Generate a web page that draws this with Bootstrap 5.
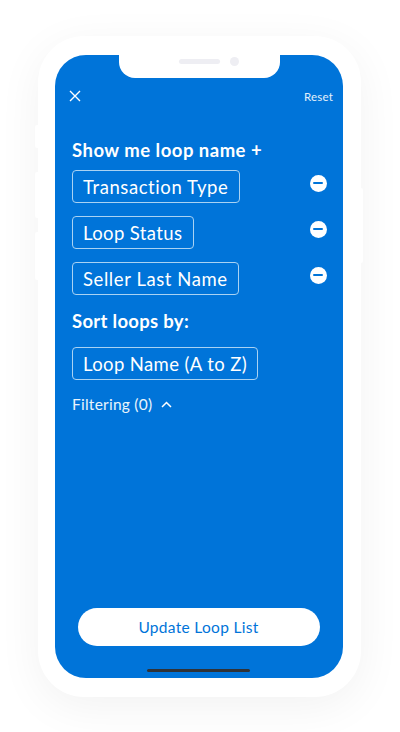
<!DOCTYPE html>
<html lang="en"><head><meta charset="utf-8"><title>Loop list</title>
<link rel="stylesheet" href="https://cdn.jsdelivr.net/npm/bootstrap@5.3.0/dist/css/bootstrap.min.css">
<style>
html,body{height:732px;overflow:hidden;background:#fff}
body{font-family:"Lato","Liberation Sans",sans-serif;color:#fff;padding:36px 0 0 38px}
.phone-frame{position:relative;width:323px;height:661px;background:#fff;border-radius:46px;padding:19px 18px 19px 17px;box-shadow:0 10px 45px rgba(0,0,0,.055)}
.side-key{position:absolute;background:#fff;width:6px;border-radius:2px}
.key-a{left:-3px;top:89px;height:23px}
.key-b{left:-3px;top:136px;height:46px}
.key-c{left:-3px;top:196px;height:48px}
.key-d{right:-2px;top:152px;height:75px}
.phone-screen{position:relative;height:623px;background:#0074d9;border-radius:31px;padding:0 10px 0 17px}
.phone-notch{position:absolute;left:64px;top:0;width:161px;height:23px;background:#fff;border-radius:0 0 16px 16px}
.notch-speaker{position:absolute;left:60px;top:4px;width:41px;height:5px;border-radius:3px;background:#eeeef3}
.notch-camera{position:absolute;left:111px;top:2px;width:9px;height:9px;border-radius:50%;background:#eeeef3}
.top-row{padding-top:29px;height:53px}
.close-ico{display:block;margin-left:-3px}
.reset-link{font-size:11.5px;color:#e3f0fb;line-height:13px;letter-spacing:.2px}
.group-title{font-size:18.5px;font-weight:700;line-height:22px;margin:0;letter-spacing:.48px}
.title-show{margin-top:31px;margin-bottom:9px}
.title-sort{margin-top:15px;margin-bottom:15px;letter-spacing:.3px}
.pick-row{height:33px;margin-bottom:13px}
.pick-chip{display:inline-block;height:33px;line-height:32px;border:1px solid #a9d2f3;border-radius:4px;font-size:18.5px;padding:0 10.5px 0 10px;white-space:nowrap;letter-spacing:.58px}
.chip-tight{letter-spacing:.38px}
.minus-dot{width:17px;height:17px;border-radius:50%;background:#fff;margin-right:6.5px;margin-top:-7px;display:flex;align-items:center;justify-content:center}
.minus-dot i{display:block;width:10px;height:2px;background:#0074d9;border-radius:1px}
.filter-row{font-size:15.5px;line-height:18px;margin-top:15px;gap:9px;color:#eaf4fc;letter-spacing:.25px}
.update-btn{position:absolute;left:22.5px;top:553px;width:242px;height:38px;border-radius:19px;background:#fff;color:#0074d9;border:0;font-size:15.5px;line-height:38px;padding:0;letter-spacing:.3px}
.home-bar{position:absolute;left:91.500px;top:614px;width:103px;height:3px;border-radius:2px;background:#2f3237}
</style></head>
<body>
<div class="phone-frame">
  <span class="side-key key-a"></span><span class="side-key key-b"></span><span class="side-key key-c"></span><span class="side-key key-d"></span>
  <div class="phone-screen">
    <div class="phone-notch"><span class="notch-speaker"></span><span class="notch-camera"></span></div>
    <div class="top-row d-flex justify-content-between align-items-center">
      <svg class="close-ico" width="12" height="12" viewBox="0 0 12 12"><path d="M1 1 11 11M11 1 1 11" stroke="#fff" stroke-width="1.4" fill="none"/></svg>
      <span class="reset-link">Reset</span>
    </div>
    <h2 class="group-title title-show">Show me loop name +</h2>
    <div class="pick-row d-flex justify-content-between align-items-center"><span class="pick-chip">Transaction Type</span><span class="minus-dot"><i></i></span></div>
    <div class="pick-row d-flex justify-content-between align-items-center"><span class="pick-chip chip-tight">Loop Status</span><span class="minus-dot"><i></i></span></div>
    <div class="pick-row d-flex justify-content-between align-items-center"><span class="pick-chip">Seller Last Name</span><span class="minus-dot"><i></i></span></div>
    <h2 class="group-title title-sort">Sort loops by:</h2>
    <div class="pick-row d-flex"><span class="pick-chip chip-tight">Loop Name (A to Z)</span></div>
    <div class="filter-row d-flex align-items-center"><span>Filtering (0)</span>
      <svg width="11" height="7" viewBox="0 0 11 7"><path d="M1 6 5.500 1.500 10 6" stroke="#fff" stroke-width="1.500" fill="none"/></svg></div>
    <button type="button" class="btn update-btn">Update Loop List</button>
    <span class="home-bar"></span>
  </div>
</div>
<script src="https://cdn.jsdelivr.net/npm/bootstrap@5.3.0/dist/js/bootstrap.bundle.min.js"></script>
</body></html>
